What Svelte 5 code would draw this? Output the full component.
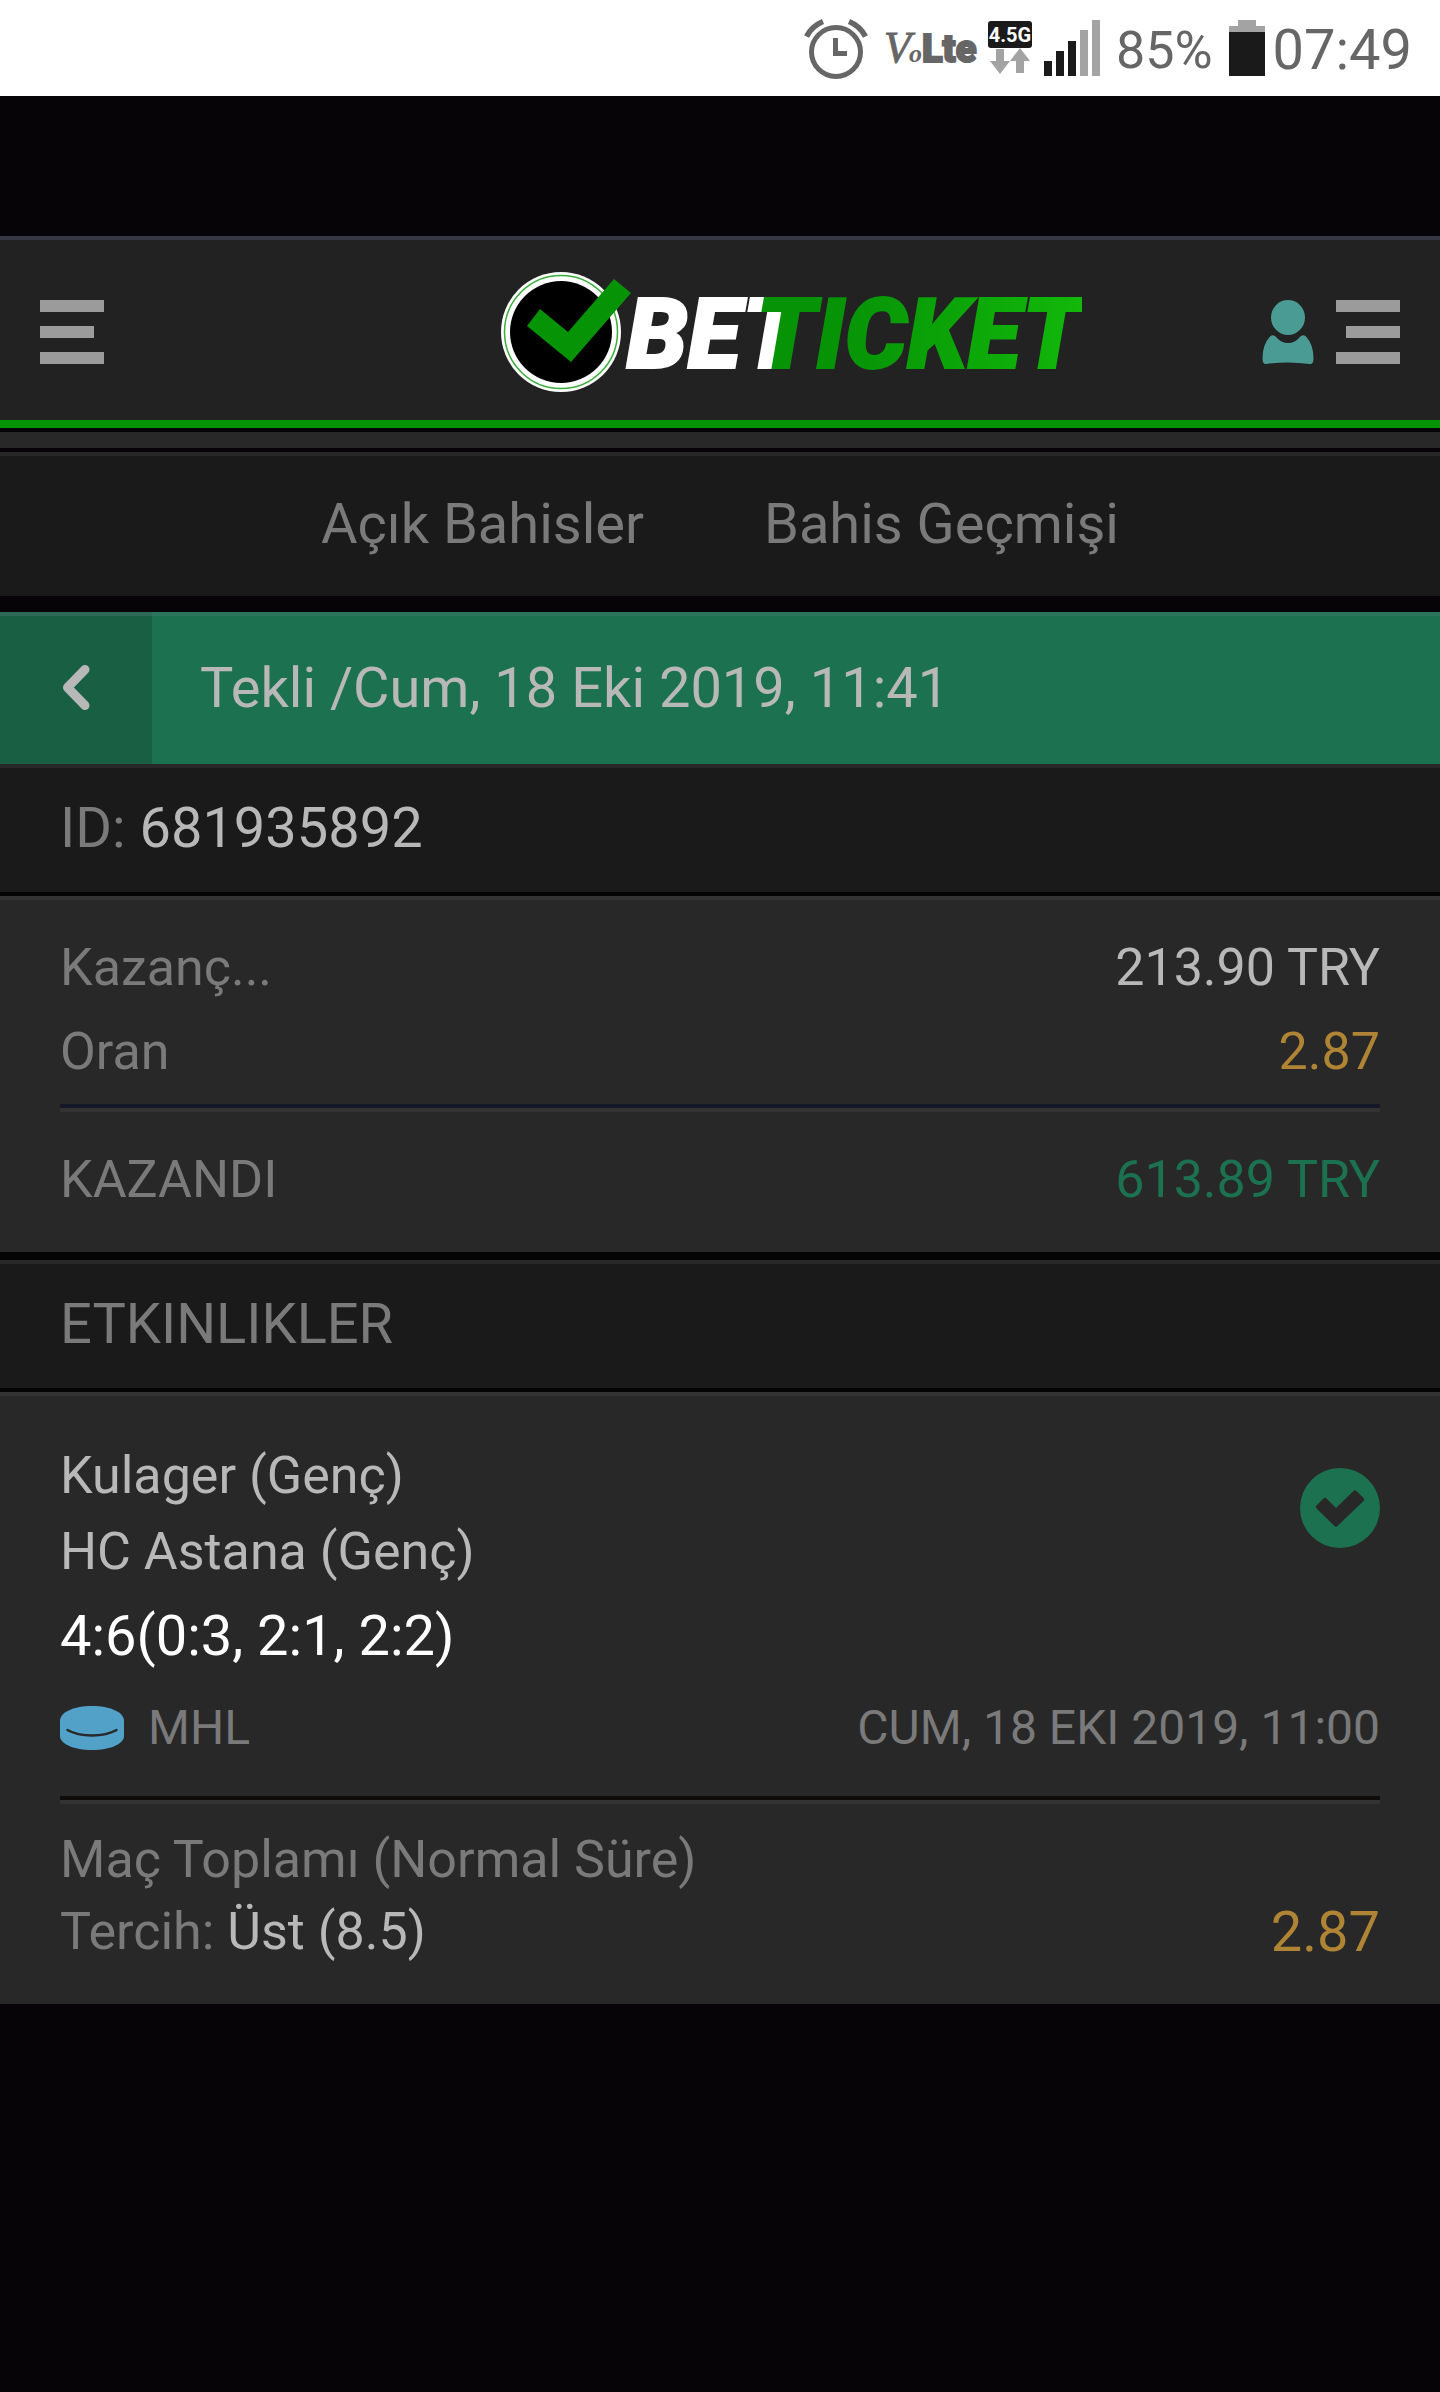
<script lang="ts">
  const tabs = ['Açık Bahisler', 'Bahis Geçmişi'];
  const signal = [15, 25, 35, 46, 56];

  const bet = {
    title: 'Tekli /Cum, 18 Eki 2019, 11:41',
    id: '681935892',
    stake: '213.90 TRY',
    odds: '2.87',
    won: '613.89 TRY',
  };

  const events = [
    {
      home: 'Kulager (Genç)',
      away: 'HC Astana (Genç)',
      score: '4:6(0:3, 2:1, 2:2)',
      league: 'MHL',
      date: 'CUM, 18 EKI 2019, 11:00',
      market: 'Maç Toplamı (Normal Süre)',
      pick: 'Üst (8.5)',
      odds: '2.87',
    },
  ];
</script>

<div class="status">
  <svg width="64" height="62" viewBox="0 0 64 62" aria-label="Alarm">
    <g fill="none" stroke="#666">
      <circle cx="32" cy="35" r="24.500" stroke-width="5" />
      <path d="M2.500 19.500Q8 9 19 4.500M61.500 19.500Q56 9 45 4.500" stroke-width="5.500" />
      <path d="M31.500 21v15.500H43" stroke-width="5" />
    </g>
  </svg>
  <svg class="volte" width="96" height="56" viewBox="0 0 96 56" fill="#666">
    <text class="volte-v" x="0" y="42">V</text>
    <text class="volte-o" x="25" y="42">o</text>
    <text class="volte-lte" x="38" y="42">Lte</text>
  </svg>
  <svg class="net" width="44" height="54" viewBox="0 0 44 54">
    <rect width="44" height="27" rx="3" fill="#1a1a1a" />
    <text class="net-type" x="22" y="21" text-anchor="middle">4.5G</text>
    <path d="M8 28h8v12h6L12 53 2 40h6zM28 52h8V40h6L32 27 22 40h6z" fill="#a3a3a3" />
  </svg>
  <svg class="bars" width="56" height="56" viewBox="0 0 56 56">
    {#each signal as h, i}
      <rect x={i * 12} y={56 - h} width="8" height={h} fill={i < 3 ? '#1a1a1a' : '#a3a3a3'} />
    {/each}
  </svg>
  <span class="percent">85%</span>
  <svg class="battery" width="36" height="56" viewBox="0 0 36 56">
    <path d="M9 0h18v6h9v6H0V6h9z" fill="#a3a3a3" />
    <path d="M0 12h36v44H0z" fill="#1a1a1a" />
  </svg>
  <time class="clock">07:49</time>
</div>

<header>
  <button class="icon-btn" aria-label="Menü">
    <svg width="64" height="64" viewBox="0 0 64 64" fill="#9b9b9b">
      <path d="M0 0h64v12H0zM0 26h54v12H0zM0 52h64v12H0z" />
    </svg>
  </button>
  <a class="logo" href="/" aria-label="Betticket">
    <svg width="132" height="120" viewBox="0 0 132 120">
      <circle cx="60" cy="60" r="60" fill="#fff" />
      <circle cx="60" cy="60" r="56.500" fill="none" stroke="#3aae3a" stroke-width="1.500" />
      <circle cx="60" cy="60" r="51" fill="#000" />
      <path d="M113 7l17 14-60 69-44-36 13-17 28 23z" fill="#069306" />
    </svg>
    <span class="word"><span class="bet">BET</span><span class="ticket">TICKET</span></span>
  </a>
  <div class="account">
    <button class="icon-btn" aria-label="Hesap">
      <svg width="52" height="64" viewBox="0 0 52 64" fill="#4a9b94">
        <ellipse cx="26" cy="17.500" rx="17" ry="17.500" />
        <path d="M8 36.500Q12 33.500 15 38q4.500 5 11 5t11-5q3-4.500 7-1.500 7.500 8 7.500 22 0 6-4 5.500-10.500-1.500-21.500-1.500T4.500 64Q.500 64.500.500 58.500.500 44.500 8 36.500z" />
      </svg>
    </button>
    <button class="icon-btn" aria-label="Kupon">
      <svg width="64" height="64" viewBox="0 0 64 64" fill="#9b9b9b">
        <path d="M0 0h64v12H0zM10 26h54v12H10zM0 52h64v12H0z" />
      </svg>
    </button>
  </div>
</header>
<div class="strip"></div>

<nav>
  {#each tabs as tab}
    <a href="/">{tab}</a>
  {/each}
</nav>

<main>
  <div class="title">
    <button class="back" aria-label="Geri">
      <svg width="32" height="48" viewBox="0 0 32 48">
        <path d="M25 5.500L7.500 23.500 25 41.500" fill="none" stroke="#b8b8b8" stroke-width="9" stroke-linecap="round" stroke-linejoin="round" />
      </svg>
    </button>
    <h1>{bet.title}</h1>
  </div>

  <p class="bar">ID: <b>{bet.id}</b></p>

  <dl class="panel summary">
    <div><dt>Kazanç...</dt><dd>{bet.stake}</dd></div>
    <div><dt>Oran</dt><dd class="odds">{bet.odds}</dd></div>
    <div class="total"><dt>KAZANDI</dt><dd>{bet.won}</dd></div>
  </dl>

  <h2 class="bar events">ETKINLIKLER</h2>

  {#each events as e}
    <article class="panel">
      <div class="match">
        <div class="teams">
          <div>{e.home}</div>
          <div>{e.away}</div>
        </div>
        <svg class="won" width="80" height="80" viewBox="0 0 80 80" aria-label="Kazandı">
          <circle cx="40" cy="40" r="40" fill="#1c7151" />
          <path d="M25 32.500L36 43.500 55 25 61.500 31.500 36 56 18.500 39z" fill="#282828" stroke="#282828" stroke-width="5" stroke-linejoin="round" />
          <path d="M27 26L36 36.500 48 24z" fill="#1c7151" />
        </svg>
      </div>
      <div class="score">{e.score}</div>
      <div class="league">
        <svg width="64" height="44" viewBox="0 0 64 44">
          <path d="M0 15C0 6 14 0 32 0s32 6 32 15v15c0 8-14 14-32 14S0 38 0 30z" fill="#51a1c8" />
          <path d="M7.500 24Q17 29.500 32 29.500T56.500 24" fill="none" stroke="#282828" stroke-width="2.500" stroke-linecap="round" />
        </svg>
        <span>{e.league}</span>
        <time>{e.date}</time>
      </div>
      <div class="market">
        <div>{e.market}</div>
        <div class="pick">
          <span>Tercih: <b>{e.pick}</b></span>
          <span class="odds">{e.odds}</span>
        </div>
      </div>
    </article>
  {/each}
</main>

<style>
  :global(body) { margin: 0; background: #060406; color: #7a7a7a; font-family: Roboto, sans-serif; }
  svg { display: block; flex: none; }
  h1, h2, p, dl, dd { margin: 0; font-weight: 400; }
  b { font-weight: 400; color: #b8b8b8; }
  a { color: inherit; text-decoration: none; }
  button { border: 0; padding: 0; cursor: pointer; }
  .icon-btn { background: none; }

  .status { display: flex; justify-content: flex-end; align-items: center; height: 96px; padding-right: 28px; background: #fff; color: #666; }
  .volte { margin-left: 16px; }
  .volte-v { font: italic 44px "Liberation Serif", serif; stroke: #666; stroke-width: 1px; }
  .volte-o { font: italic bold 26px "Liberation Serif", serif; }
  .volte-lte { font: 900 38px Roboto, sans-serif; stroke: #666; stroke-width: 2px; }
  .net { margin-left: 8px; }
  .net-type { font: bold 20px Roboto, sans-serif; fill: #fff; }
  .bars { margin-left: 12px; }
  .percent, .clock { padding-top: 4px; }
  .percent { margin-left: 16px; font-size: 52px; }
  .battery { margin: 0 8px 0 16px; }
  .clock { font-size: 56px; }

  header { display: flex; align-items: center; height: 176px; margin-top: 140px; padding: 4px 40px 0; border-top: 4px solid #353845; border-bottom: 8px solid #069306; background: #222; }
  .logo { display: flex; align-items: center; margin: 0 180px 0 auto; }
  .word { margin-left: -6px; padding-top: 6px; font-size: 98px; font-style: italic; font-weight: 900; line-height: 120px; -webkit-text-stroke: 2px; }
  .bet { color: #fff; }
  .ticket { position: relative; margin-left: -46px; background: linear-gradient(90deg, #069306 25%, #12b80a); background-clip: text; color: transparent; }
  .account { display: flex; gap: 22px; }
  .strip { height: 16px; margin: 4px 0; background: #282828; }

  nav { display: flex; justify-content: center; gap: 120px; height: 140px; margin-bottom: 16px; border-top: 4px solid #282828; background: #1a1a1a; font-size: 56px; line-height: 136px; }

  .title { display: flex; height: 152px; background: #1c7151; color: #b8b8b8; box-shadow: inset 0 4px #2a735a; }
  .title h1 { padding-left: 48px; font-size: 56px; line-height: 152px; }
  .back { display: flex; align-items: center; justify-content: center; width: 152px; background: #185f44; box-shadow: inset 0 4px #2f6856; }

  .bar { padding: 0 60px; border-bottom: 4px solid #050405; background: #1a1a1a; box-shadow: inset 0 4px #282828; font-size: 56px; line-height: 128px; }
  .events { border-top: 8px solid #050405; }
  .panel { padding: 26px 60px 30px; border-top: 4px solid #333; background: #282828; font-size: 52px; }
  .summary > div { display: flex; justify-content: space-between; line-height: 84px; }
  dd { color: #b8b8b8; }
  .odds, dd.odds { color: #af8435; }
  .summary .total { margin-top: 10px; padding-top: 30px; border-top: 4px solid #141827; box-shadow: inset 0 4px #333; }
  .total dd { color: #1c7151; }

  article.panel { padding: 42px 60px 36px; }
  .match { display: flex; justify-content: space-between; color: #b8b8b8; line-height: 76px; }
  .won { margin-top: 30px; }
  .score { padding-bottom: 2px; color: #fff; font-size: 56px; line-height: 92px; }
  .league { display: flex; align-items: center; gap: 24px; font-size: 48px; line-height: 88px; }
  .league time { margin-left: auto; }
  .market { margin-top: 24px; padding-top: 24px; border-top: 4px solid #0f0c0c; box-shadow: inset 0 4px #333; line-height: 72px; }
  .pick { display: flex; justify-content: space-between; }
  .pick .odds { font-size: 56px; }
</style>
